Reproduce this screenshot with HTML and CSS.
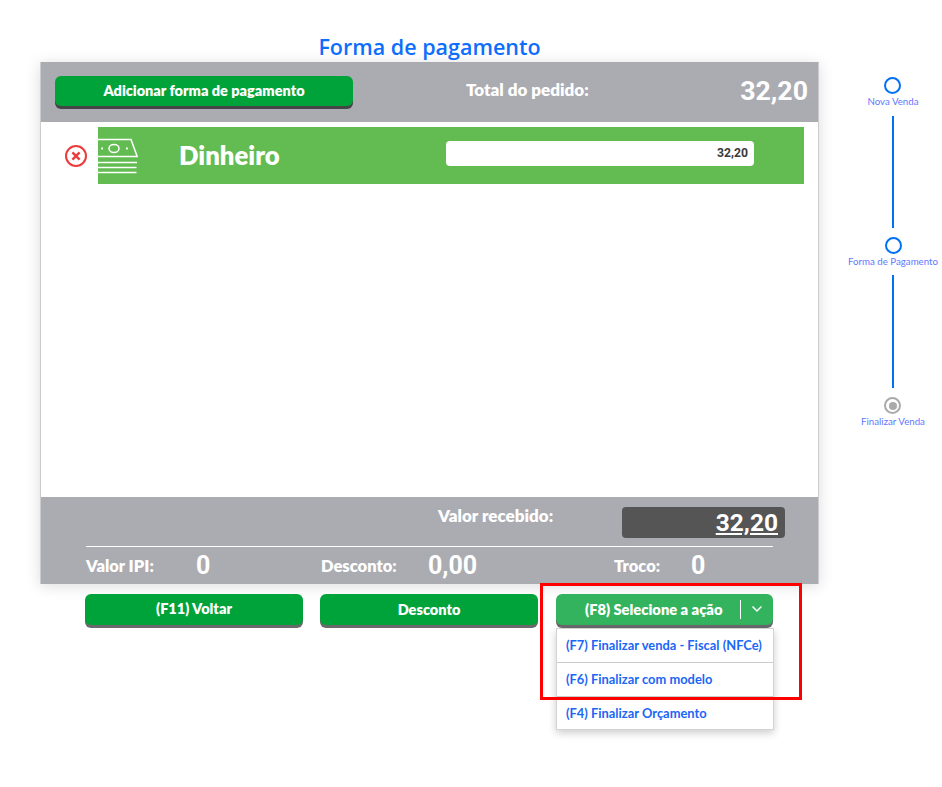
FILE: index.html
```html
<!DOCTYPE html>
<html lang="pt-BR">
<head>
<meta charset="utf-8">
<title>Forma de pagamento</title>
<link rel="stylesheet" href="styles.css">
</head>
<body>
<div class="page">
  <main class="main">
    <h1 class="title">Forma de pagamento</h1>
    <section class="panel">
      <header class="panel-head">
        <button class="btn btn-add">Adicionar forma de pagamento</button>
        <span class="total-label">Total do pedido:</span>
        <span class="total-value">32,20</span>
      </header>
      <div class="panel-body">
        <div class="pay-row">
          <svg class="remove" viewBox="0 0 24 24" width="24" height="24" fill="none" stroke="#ec3b3b"><circle cx="12" cy="12" r="10" stroke-width="2"/><path d="M8.400 8.400l7.200 7.200M15.600 8.400l-7.200 7.200" stroke-width="2.400"/></svg>
          <div class="pay-card">
            <svg class="money" viewBox="0 0 40 36" width="40" height="36" fill="none" stroke="#fff" stroke-width="1.500"><path d="M0 1.500H33L39.200 18.500H0"/><ellipse cx="16" cy="10.500" rx="5" ry="4"/><path d="M3.200 10.500h1.800M28 10.500h1.800" stroke-width="1.800"/><path d="M0 24.500H39M0 29.500H38.500M0 34.500H38.500" stroke-width="1.500"/></svg>
            <span class="pay-name">Dinheiro</span>
            <div class="pay-input">32,20</div>
          </div>
        </div>
      </div>
      <footer class="panel-foot">
        <div class="received">
          <span class="received-label">Valor recebido:</span>
          <div class="received-box"><u>32,20</u></div>
        </div>
        <div class="summary">
          <span class="sum-label sum-ipi">Valor IPI:</span>
          <span class="sum-value sum-ipi-v">0</span>
          <span class="sum-label sum-desc">Desconto:</span>
          <span class="sum-value sum-desc-v">0,00</span>
          <span class="sum-label sum-troco">Troco:</span>
          <span class="sum-value sum-troco-v">0</span>
        </div>
      </footer>
    </section>
    <div class="actions">
      <button class="btn btn-action btn-back">(F11) Voltar</button>
      <button class="btn btn-action">Desconto</button>
      <div class="dropdown">
        <button class="btn btn-action btn-select">
          <span class="select-text">(F8) Selecione a ação</span>
          <span class="select-sep"></span>
          <svg class="chev" viewBox="0 0 12 8" width="12" height="8" fill="none" stroke="#fff" stroke-width="1.500"><path d="M1.500 1.500L6 6l4.500-4.500"/></svg>
        </button>
        <ul class="menu">
          <li class="menu-item">(F7) Finalizar venda - Fiscal (NFCe)</li>
          <li class="menu-item">(F6) Finalizar com modelo</li>
          <li class="menu-item">(F4) Finalizar Orçamento</li>
        </ul>
        <div class="highlight"></div>
      </div>
    </div>
  </main>
  <aside class="steps">
    <div class="step">
      <span class="dot"></span>
      <span class="step-label">Nova Venda</span>
    </div>
    <span class="line line-1"></span>
    <div class="step">
      <span class="dot"></span>
      <span class="step-label">Forma de Pagamento</span>
    </div>
    <span class="line line-2"></span>
    <div class="step">
      <span class="dot dot-off"></span>
      <span class="step-label">Finalizar Venda</span>
    </div>
  </aside>
</div>
</body>
</html>
```
FILE: styles.css
```css
* { box-sizing: border-box; }
html, body { margin: 0; padding: 0; background: #fff; }
body { font-family: "Lato", "Liberation Sans", sans-serif; height: 787px; overflow: hidden; }
.page { display: flex; align-items: flex-start; padding-left: 40px; }
.main { width: 779px; flex: none; }
.title {
  margin: 0; height: 62px; padding-top: 34px; text-align: center;
  font: 600 21.500px/26px "Open Sans", sans-serif; color: #0d6efd;
}
.panel { box-shadow: 0 2px 14px rgba(0,0,0,.14); background: #fff; border-left: 1px solid #ccc; border-right: 1px solid #ccc; }
.panel-head {
  height: 60px; background: #abacb1; display: flex; align-items: flex-start; position: relative;
}
.btn {
  border: 0; border-radius: 6px; background: #00a339; color: #fff; font-family: "Lato", sans-serif;
  font-weight: 800; font-size: 14.500px; cursor: pointer; padding: 0;
}
.btn-add {
  margin: 14px 0 0 14px; width: 298px; height: 30px; box-shadow: 0 3px 0 #454547; padding-bottom: 2px;
}
.total-label { margin: 18px 0 0 113px; color: #fff; font-weight: 800; font-size: 17px; line-height: 20px; }
.total-value {
  margin: 13px 0 0 auto; padding-right: 10px; color: #fff;
  font: 700 26.700px/32px "Roboto", sans-serif;
}
.panel-body { height: 375px; padding-top: 5px; }
.pay-row { display: flex; align-items: center; padding-left: 23px; }
.remove { flex: none; margin-right: 10px; }
.pay-card {
  width: 706px; height: 57px; background: #62bc51; display: flex; align-items: center;
}
.money { flex: none; }
.pay-name { margin-left: 41px; width: 267px; color: #fff; font-weight: 800; font-size: 25.700px; margin-top: -1px; }
.pay-input {
  width: 308px; height: 25px; background: #fff; border-radius: 4px; text-align: right; padding-right: 6px;
  font: 700 12.200px/25px "Roboto", sans-serif; color: #3a3a3a; margin-top: -4px;
}
.panel-foot { height: 87px; background: #abacb1; padding: 10px 45px 0; }
.received { display: flex; align-items: flex-start; height: 40px; border-bottom: 1px solid #fff; }
.received-label { margin-left: 352px; color: #fff; font-weight: 800; font-size: 17px; line-height: 18px; }
.received-box {
  margin-left: auto; margin-right: -12px; width: 163px; height: 31px; background: #555; border-radius: 4px;
  color: #fff; text-align: right; padding-right: 7px;
  font: 700 24.500px/31px "Roboto", sans-serif;
}
.summary { display: flex; align-items: center; height: 38px; color: #fff; }
.sum-label { font-weight: 800; font-size: 16.500px; }
.sum-value { font: 700 25px/30px "Roboto", sans-serif; }
.sum-ipi { width: 110px; }
.sum-ipi-v { width: 125px; }
.sum-desc { width: 107px; }
.sum-desc-v { width: 186px; }
.sum-troco { width: 77px; }
.actions { display: flex; padding: 10px 45px 0 45px; gap: 17px; }
.btn-action { flex: none; width: 218px; height: 31px; box-shadow: 0 3px 0 #6a6a6c; padding-bottom: 1px; }
.btn-back { padding-bottom: 3px; }
.dropdown { position: relative; width: 217px; flex: none; margin-left: 1px; }
.btn-select { width: 217px; background: #33b35d; display: flex; align-items: center; padding: 0 10px 1px 29px; font-size: 14.700px; }
.select-text { width: 156px; text-align: left; white-space: nowrap; }
.select-sep { width: 1px; height: 19px; background: #fff; margin-right: 10px; }
.menu {
  list-style: none; margin: 3px 0 0; padding: 0; width: 218px; background: #fff; border: 1px solid #d3d3d3;
  box-shadow: 0 3px 8px rgba(0,0,0,.2);
}
.menu-item {
  height: 34px; padding-left: 9px; color: #1a66f5; font-weight: 700; font-size: 12.900px; line-height: 33px;
  border-bottom: 1px solid #ccc; white-space: nowrap;
}
.menu-item:last-child { border-bottom: 0; height: 32px; }
.highlight { position: absolute; left: -16px; top: -11px; width: 262px; height: 117px; border: 3px solid #f00; pointer-events: none; }
.steps { flex: none; width: 100px; margin-left: 24px; padding-top: 77px; display: flex; flex-direction: column; align-items: center; color: #5f78ff; }
.step { display: flex; flex-direction: column; align-items: center; }
.dot { width: 17px; height: 17px; border: 2px solid #0070f5; border-radius: 50%; background: #fff; }
.dot-off { border-color: #aaa; position: relative; }
.dot-off::after { content: ""; position: absolute; left: 2.500px; top: 2.500px; width: 8px; height: 8px; background: #aaa; border-radius: 50%; }
.step-label { font-size: 9.700px; line-height: 12px; margin-top: 1px; white-space: nowrap; }
.line { width: 2px; background: #0070f5; display: block; }
.line-1 { height: 112px; margin: 9px 0 9px; }
.line-2 { height: 113px; margin: 8px 0 9px; }
```
